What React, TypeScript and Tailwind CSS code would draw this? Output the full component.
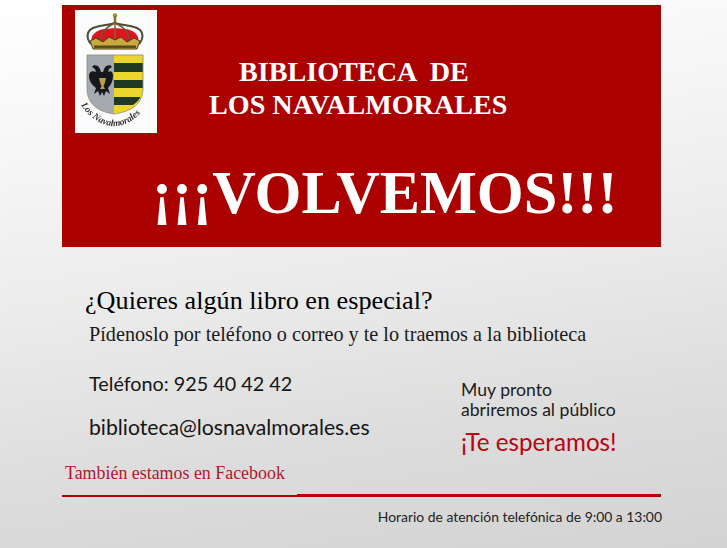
const serif = "font-['Liberation_Serif',serif]"
const sans = "font-['Lato','Open_Sans',sans-serif]"

function Crest() {
  return (
    <div className="h-[123px] w-[82px] shrink-0 bg-[#fbfbfb]">
      <svg viewBox="0 0 82 123" className="h-[123px] w-[82px] blur-[0.4px]">
        {/* crown */}
        <circle cx="40" cy="5.5" r="2.2" fill="#a88a3c" />
        <rect x="38.8" y="6" width="2.4" height="7" fill="#8a7030" />
        <path d="M17 33C14 25 23 19 31 19C36 18 44 18 49 19C57 19 66 25 63 33Z" fill="#e0141e" />
        <path d="M16 34C10 27 12 19 21 17C28 15 35 15 40 13C45 15 52 15 59 17C68 19 70 27 64 34" fill="none" stroke="#4c4e36" strokeWidth="2" />
        <path d="M26 32C24 24 31 17 40 13C49 17 56 24 54 32" fill="none" stroke="#5e5a36" strokeWidth="1.5" />
        <path d="M40 13V31" stroke="#7a6a30" strokeWidth="1.5" />
        <path d="M15 31L21 28L28 32L34 27L40 30L46 27L52 32L59 28L65 31L62 39H18Z" fill="#c9a93f" stroke="#463c1c" strokeWidth="1" />
        <rect x="19" y="35.5" width="42" height="2.4" fill="#54481f" />
        {/* shield */}
        <path d="M12 45H39V104C27 102 12 97 12 78Z" fill="#a5a9b0" />
        <path d="M39 45H68V78C68 97 52 102 39 104Z" fill="#ecd62e" />
        <path d="M39 53H68V62H39Z" fill="#1f3a24" />
        <path d="M39 70H68V78H39Z" fill="#1f3a24" />
        <path d="M39 87H65.5C64 90 61 93 58 95H39Z" fill="#1f3a24" />
        <path d="M12 45H68V78C68 97 52 102 39 104C27 102 12 97 12 78Z" fill="none" stroke="#8d8c72" strokeWidth="0.8" />
        {/* eagle */}
        <path d="M19 55L23 56L25 59L26 62H28L29 59L31 56L35 55L37 57L34 59L33 62C36 60 38 62 38 66C38 71 36 75 33 78L35 84L31 81L29 86L27 82L25 86L23 81L19 84L21 78C17 75 14 71 14 66C14 62 17 60 21 62L20 59L17 57Z" fill="#17181c" />
        <path d="M24 68H31L30 72C29.5 74 29 75 28.5 76L30 79H25L26.5 76C26 75 25.5 74 25 72Z" fill="#b6a04c" />
        {/* motto, real text along a curve */}
        <path id="motto" d="M6 95C14 108 28 117 41 116C53 115 63 108 71 96" fill="none" />
        <text className="font-['Liberation_Serif',serif] italic" fontSize="9.5" fontWeight="700" fill="#333331">
          <textPath href="#motto">Los Navalmorales</textPath>
        </text>
      </svg>
    </div>
  )
}

export default function App() {
  return (
    <div className="h-[548px] w-[727px] overflow-hidden bg-[linear-gradient(172deg,#ffffff_0%,#f6f6f6_25%,#ebebeb_50%,#dddddd_75%,#d3d3d3_100%)] pl-[62px] pt-[5px]">
      {/* banner */}
      <div className="h-[242px] w-[599px] bg-[#ab0000] pl-[13px] pt-[5px] text-white">
        <div className="flex">
          <Crest />
          <div className={`${serif} ml-[52px] mt-[45px] whitespace-pre text-[28.15px] font-bold leading-[33px]`}>
            <div className="pl-[30px]">BIBLIOTECA  DE</div>
            <div>LOS NAVALMORALES</div>
          </div>
        </div>
        <div className={`${serif} ml-[77px] mt-[17px] text-[60.3px] font-bold leading-[86px]`}>¡¡¡VOLVEMOS!!!</div>
      </div>

      {/* info */}
      <div className={`${serif} ml-[23px] mt-[37px] text-[26.2px] leading-[34px] text-black`}>¿Quieres algún libro en especial?</div>
      <div className={`${serif} ml-[27px] mt-[3px] text-[20.2px] leading-[26px] text-[#1a1a1a]`}>
        Pídenoslo por teléfono o correo y te lo traemos a la biblioteca
      </div>

      <div className="flex">
        <div className={`${sans} ml-[27px] w-[372px] text-[#151515]`}>
          <div className="mt-[22px] text-[19.8px] leading-[28px]">Teléfono: 925 40 42 42</div>
          <div className="mt-[16px] text-[21.2px] leading-[28px]">biblioteca@losnavalmorales.es</div>
        </div>
        <div className={`${sans} mt-[33px] text-[#202020]`}>
          <div className="text-[17.6px] leading-[20px]">Muy pronto</div>
          <div className="text-[17.6px] leading-[20px]">abriremos al público</div>
          <div className="mt-[7px] text-[24.2px] leading-[30px] text-[#c00010]">¡Te esperamos!</div>
        </div>
      </div>

      <div className={`${serif} ml-[3px] mt-[4px] text-[17.9px] leading-[24px] text-[#b5142c]`}>También estamos en Facebook</div>

      {/* rules */}
      <div className="mt-[9px] flex w-[599px] items-start">
        <div className="mt-[1px] h-[2px] w-[235px] bg-[#b00000]" />
        <div className="h-[3px] flex-1 bg-[#b80000]" />
      </div>
      <div className={`${sans} mt-[10px] w-[600px] text-right text-[13.9px] leading-[20px] text-[#222]`}>
        Horario de atención telefónica de 9:00 a 13:00
      </div>
    </div>
  )
}
